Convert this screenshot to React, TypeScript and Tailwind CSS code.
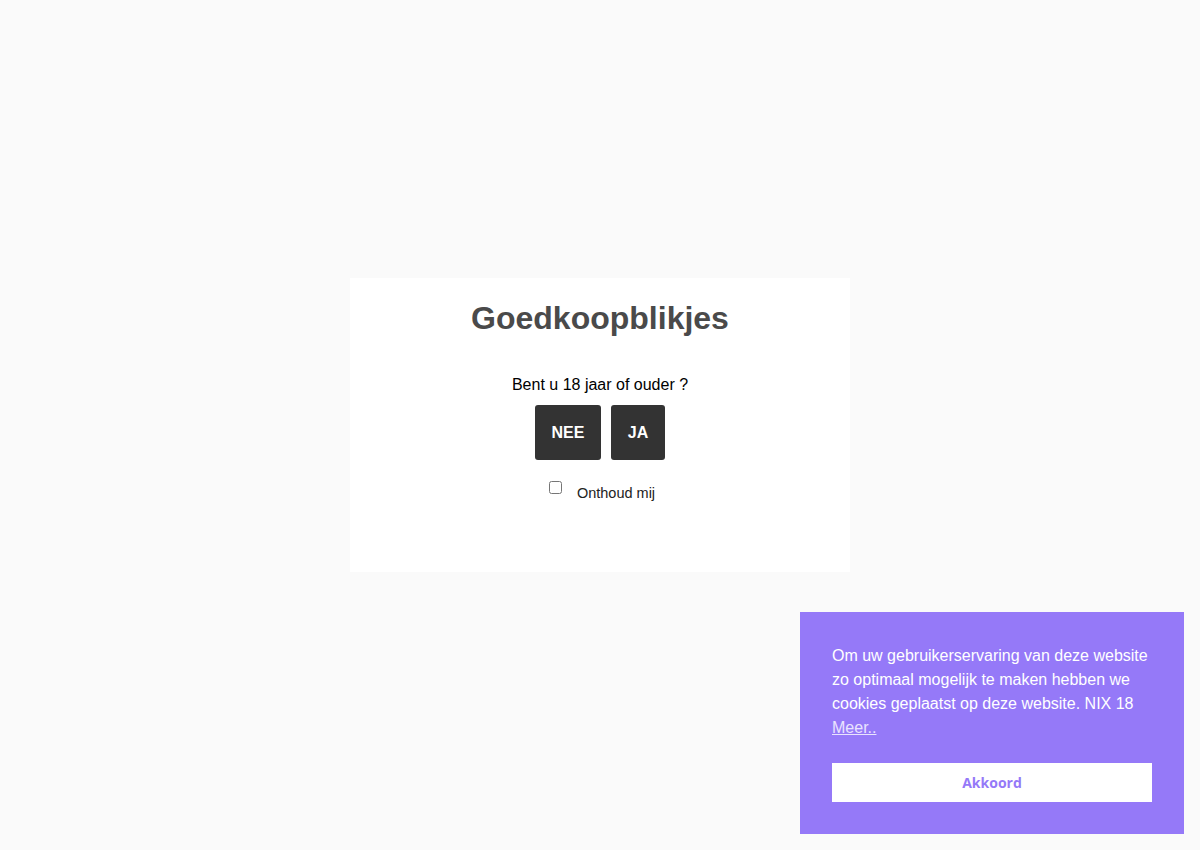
export default function App() {
  return (
    <div
      className="relative flex h-[850px] w-full items-center justify-center bg-[#fafafa]"
      style={{ fontFamily: '"Liberation Sans", Arial, sans-serif' }}
    >
      {/* Age gate */}
      <div className="flex h-[294px] w-[500px] flex-col items-center bg-white pt-[21px]">
        <h1 className="text-[32px] font-bold leading-[38px] text-[#4a4a4a]">Goedkoopblikjes</h1>
        <p className="mt-[37px] text-[16px] leading-[22px] text-black">Bent u 18 jaar of ouder ?</p>
        <div className="mt-[9px] flex gap-[10px]">
          <button className="h-[55px] w-[66px] rounded-[3px] bg-[#333333] text-[16px] font-bold text-white">
            NEE
          </button>
          <button className="h-[55px] w-[54px] rounded-[3px] bg-[#333333] text-[16px] font-bold text-white">
            JA
          </button>
        </div>
        <label className="mt-[21px] ml-[4px] flex items-start text-[14.5px] text-[#222]">
          <input type="checkbox" className="h-[13px] w-[13px]" />
          <span className="ml-[15px] mt-[4px] leading-[16px]">Onthoud mij</span>
        </label>
      </div>

      {/* Cookie notice */}
      <div className="absolute bottom-[16px] right-[16px] w-[384px] bg-[#9579f8] p-[32px]">
        <p className="text-[16px] leading-[24px] text-white">
          Om uw gebruikerservaring van deze website zo optimaal mogelijk te maken hebben we cookies geplaatst op deze
          website. NIX 18{' '}
          <a href="#" className="text-white/80 underline">
            Meer..
          </a>
        </p>
        <button
          className="mt-[23px] h-[39px] w-full bg-white text-[14px] font-bold text-[#9579f8]"
          style={{ fontFamily: '"Open Sans", sans-serif' }}
        >
          Akkoord
        </button>
      </div>
    </div>
  );
}
